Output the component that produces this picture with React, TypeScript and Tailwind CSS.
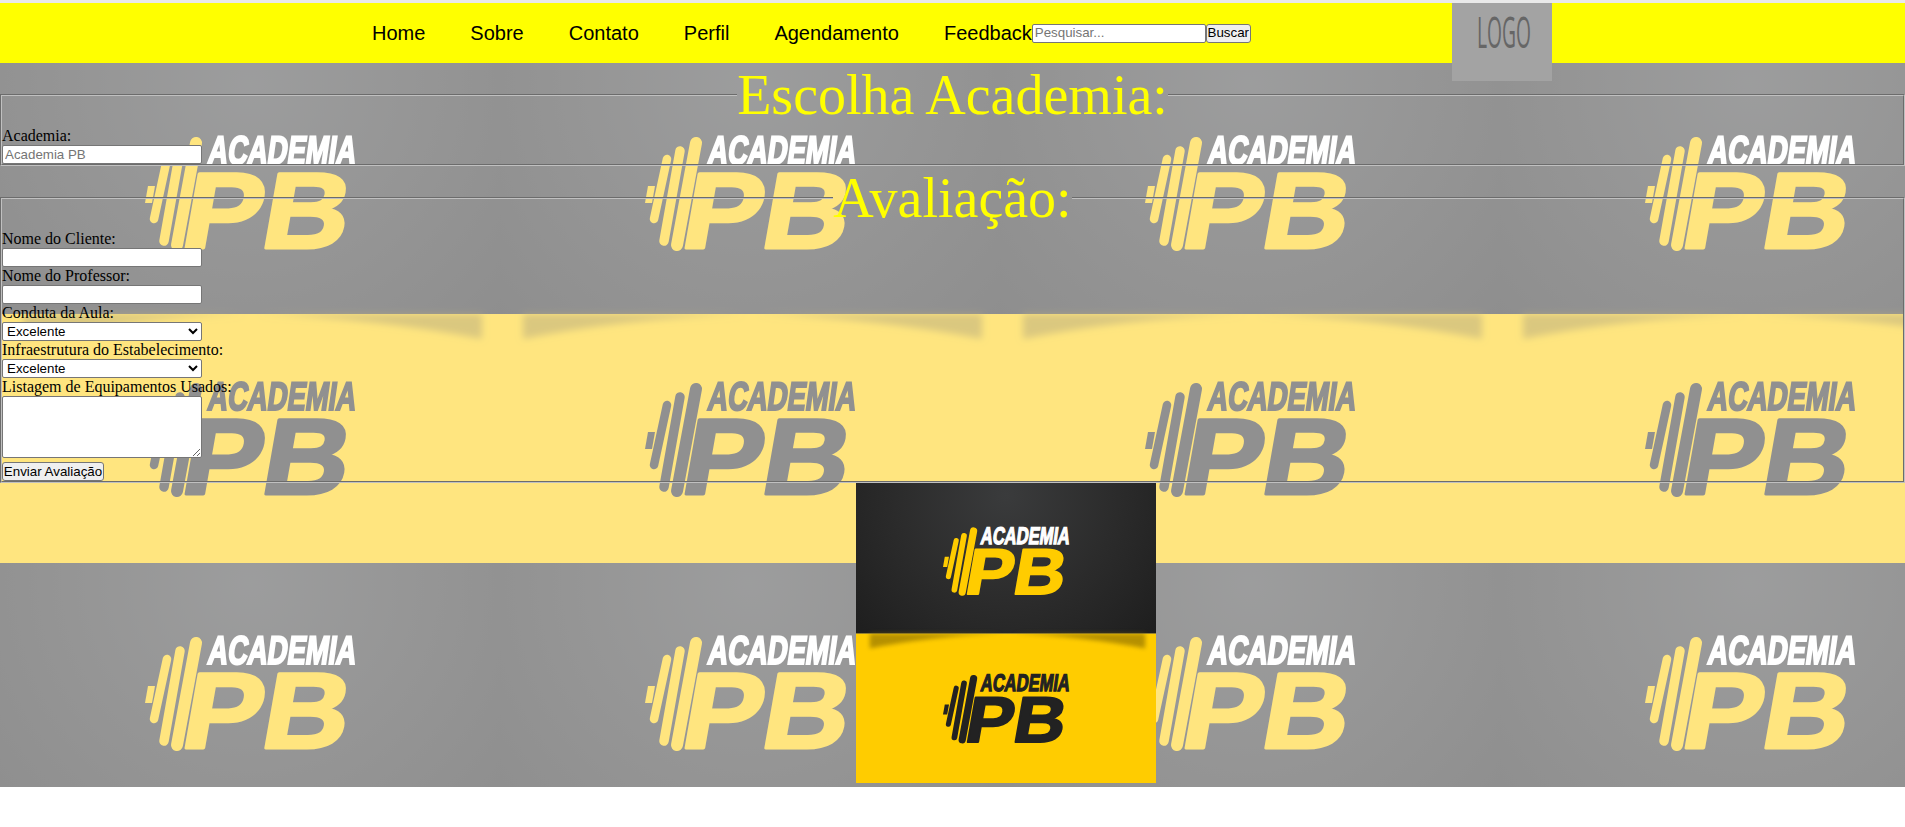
import React from "react";

const serif = "font-['Liberation_Serif',serif]";
const sans = "font-['Liberation_Sans',Arial,sans-serif]";
const field =
  "block h-[19px] border border-[#767676] rounded-[2px] bg-white px-[2px] text-[13.33px] text-black placeholder:text-[#757575] font-['Liberation_Sans',Arial,sans-serif]";
const btn =
  "block border border-[#767676] rounded-[3px] bg-[#efefef] text-[13.33px] text-black h-[19px] px-0 leading-none whitespace-nowrap font-['Liberation_Sans',Arial,sans-serif]";
const selectCls =
  "block w-[200px] h-[19px] border border-[#767676] rounded-[2px] bg-white text-[13.33px] text-black font-['Liberation_Sans',Arial,sans-serif]";
const label = "block h-[18px] leading-[18px] text-[16px] text-black whitespace-nowrap";

function Mark({ main, top }: { main: string; top: string }) {
  return (
    <g>
      <polygon points="148,123 155,123 152,140 145,140" fill={main} />
      <line x1="167" y1="96" x2="154" y2="156" stroke={main} strokeWidth="8.5" strokeLinecap="round" />
      <line x1="180" y1="88" x2="164" y2="178" stroke={main} strokeWidth="9.5" strokeLinecap="round" />
      <line x1="196" y1="80" x2="177" y2="182" stroke={main} strokeWidth="12" strokeLinecap="round" />
      <text
        x="207"
        y="101"
        fontFamily="'Liberation Sans', Arial, sans-serif"
        fontWeight="700"
        fontSize="40"
        textLength="148"
        lengthAdjust="spacingAndGlyphs"
        fill={top}
        stroke={top}
        strokeWidth="2.2"
        transform="skewX(-8) translate(14 0)"
      >
        ACADEMIA
      </text>
      <text
        x="193"
        y="185"
        fontFamily="'Liberation Sans', Arial, sans-serif"
        fontWeight="700"
        fontSize="108"
        textLength="166"
        lengthAdjust="spacingAndGlyphs"
        fill={main}
        stroke={main}
        strokeWidth="3"
        strokeLinejoin="round"
        transform="skewX(-10) translate(18 0)"
      >
        PB
      </text>
    </g>
  );
}

function Card() {
  return (
    <g>
      <rect width="500" height="251" fill="url(#darkCard)" />
      <rect y="251" width="500" height="249" fill="#ffcc00" />
      <path
        d="M23 251 L245 251 Q120 256 23 276 Z M258 251 L482 251 L482 276 Q380 256 258 251 Z"
        fill="#7a6000"
        opacity="0.55"
        filter="url(#soft)"
      />
      <Mark main="#ffcc00" top="#ffffff" />
      <g transform="translate(0 246)">
        <Mark main="#222222" top="#222222" />
      </g>
    </g>
  );
}

export default function App() {
  return (
    <div className={serif}>
      <div className="h-[3px] bg-[#e9e9e9]" />
      <nav className={`${sans} flex h-[60px] items-center bg-[#ffff00] pl-[372px] pr-[353px]`}>
        <div className="flex gap-[45px] text-[20px] leading-[23px] text-black">
          <a>Home</a>
          <a>Sobre</a>
          <a>Contato</a>
          <a>Perfil</a>
          <a>Agendamento</a>
          <a>Feedback</a>
        </div>
        <div className="flex items-center">
          <input className={`${field} w-[174px]`} placeholder="Pesquisar..." />
          <button className={`${btn} w-[45px]`}>Buscar</button>
        </div>
        <div className="ml-auto h-[78px] w-[100px] self-start bg-[#a3a3a3]">
          <svg width="100" height="78" viewBox="0 0 100 78">
            <text
              x="25"
              y="45"
              fontFamily="'Open Sans', sans-serif"
              fontSize="44"
              textLength="54"
              lengthAdjust="spacingAndGlyphs"
              fill="#666666"
            >
              LOGO
            </text>
          </svg>
        </div>
      </nav>

      <main className="relative">
        <svg className="absolute inset-0 -z-10 h-full w-full">
          <defs>
            <radialGradient id="darkCard" gradientUnits="userSpaceOnUse" cx="250" cy="20" r="340">
              <stop offset="0" stopColor="#3a3b3c" />
              <stop offset="0.55" stopColor="#2b2b2b" />
              <stop offset="1" stopColor="#1e1e1e" />
            </radialGradient>
            <filter id="soft" x="-5%" y="-40%" width="110%" height="180%">
              <feGaussianBlur stdDeviation="3.5" />
            </filter>
            <pattern id="tile" width="500" height="500" patternUnits="userSpaceOnUse">
              <g opacity="0.5">
                <Card />
              </g>
            </pattern>
          </defs>
          <rect width="100%" height="100%" fill="url(#tile)" />
        </svg>

        <fieldset className="border-2 border-[#c0c0c0] [border-style:groove]">
          <legend className="mx-auto text-[56px] leading-[64px] text-[#ffff00]">Escolha Academia:</legend>
          <label className={label}>Academia:</label>
          <input className={`${field} w-[200px]`} placeholder="Academia PB" />
        </fieldset>

        <fieldset className="border-2 border-[#c0c0c0] [border-style:groove]">
          <legend className="mx-auto text-[56px] leading-[64px] text-[#ffff00]">Avaliação:</legend>
          <label className={label}>Nome do Cliente:</label>
          <input className={`${field} w-[200px]`} />
          <label className={label}>Nome do Professor:</label>
          <input className={`${field} w-[200px]`} />
          <label className={label}>Conduta da Aula:</label>
          <select className={selectCls}>
            <option>Excelente</option>
          </select>
          <label className={label}>Infraestrutura do Estabelecimento:</label>
          <select className={selectCls}>
            <option>Excelente</option>
          </select>
          <label className={label}>Listagem de Equipamentos Usados:</label>
          <textarea className={`block h-[62px] w-[200px] rounded-[2px] border border-[#767676] bg-white px-[2px] text-[13.33px] text-black ${sans}`} />
          <button className={`${btn} mt-[4px] w-[102px]`}>Enviar Avaliação</button>
        </fieldset>

        <div className="ml-[856px] pb-[4px]">
          <svg className="block" width="300" height="300" viewBox="0 0 500 500">
            <Card />
          </svg>
        </div>
      </main>
    </div>
  );
}
